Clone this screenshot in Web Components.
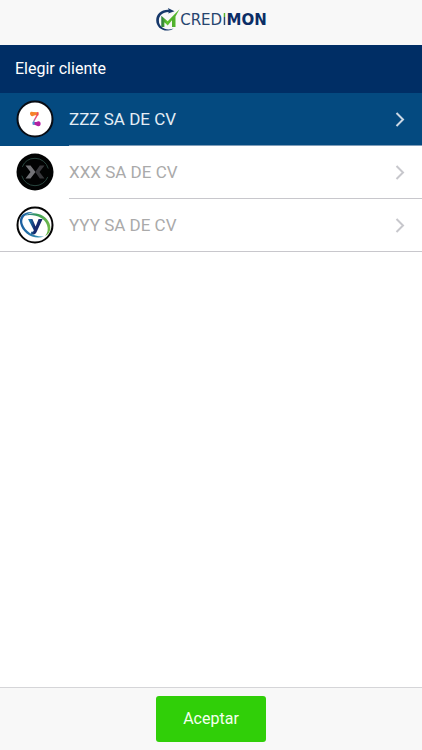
<!DOCTYPE html>
<html lang="es">
<head>
<meta charset="utf-8">
<meta name="viewport" content="width=device-width, initial-scale=1">
<title>Credimon</title>
<style>
html, body { height: 100%; }
body { margin: 0; font-family: Roboto, "Liberation Sans", sans-serif; background: #fff; }
</style>
</head>
<body>
<client-picker></client-picker>

<script>
class BrandLogo extends HTMLElement {
  constructor() {
    super();
    this.attachShadow({ mode: 'open' }).innerHTML = `
      <style>
        :host { display: flex; align-items: center; font: 15px/20px "DejaVu Sans", sans-serif; color: #27456f; }
        svg { display: block; }
        .wide { font-weight: 700; color: #0b2d66; }
        .i { background: linear-gradient(#55b52c 0 7px, #27456f 7px); -webkit-background-clip: text; background-clip: text; color: transparent; }
      </style>
      <svg width="25" height="26" viewBox="0 0 25 26" aria-hidden="true">
        <defs>
          <linearGradient id="m" x1="0" x2="1" y1="0" y2="0"><stop offset="0" stop-color="#28763a"/><stop offset=".3" stop-color="#62c82c"/><stop offset=".6" stop-color="#4fae2e"/><stop offset="1" stop-color="#58bf2c"/></linearGradient>
        </defs>
        <path d="M19.500 4.200 12.900 .900 13.700 2.700C6.500 2.300 1.200 6.800 1.200 13.200c0 6.200 5.200 10.800 11.800 10.300 2.200-.2 4.100-.9 5.600-2.100-7.400 2.900-14.600-.8-14.700-7.700C3.800 8.500 7.800 4.900 13.700 5l-.6 1.500z" fill="#17396b"/>
        <path d="M6.300 20V8.700l6.400 5.600L24.500 2.200 20.500 9.400V20H17v-6.700l-4.300 5.200-3.300-3.300V20z" fill="url(#m)"/>
      </svg>
      <span>CRED</span><span class="i">I</span><span class="wide">MON</span>`;
  }
}

const AVATARS = {
  zzz: `<circle cx="19" cy="19" r="17.500" fill="#fff" stroke="#080c14" stroke-width="2"/>
    <defs><linearGradient id="z" x1="0" x2="0" y1="0" y2="1"><stop stop-color="#f6602c"/><stop offset=".5" stop-color="#ec4a86"/><stop offset="1" stop-color="#5a9fd4"/></linearGradient></defs>
    <path d="M21.500 13.500c.5 2.500-3.700 5.500-3.900 9" fill="none" stroke="url(#z)" stroke-width="1.500"/>
    <path d="M14 13.300c0-1.600 1.400-2 2.800-1.400l5.600.4v2.800c-2 .1-3.800.1-5.400.9-1.600.7-3-.7-3-2.700z" fill="#f5822b"/>
    <path d="M21 12.300h1.400v3.200l-2 .1z" fill="#ee4460"/>
    <path d="M16.800 21.900c2.200.3 3.400.2 4.800-.5 1.900-.8 3.200.8 3 2.600-.1 2-1.700 2.700-3.200 1.900-1.500-.6-3-.9-4.600-1.300z" fill="#b41fa0"/>
    <path d="M16.600 21.800 18.500 22v3l-1.900-.4z" fill="#3e9fd5"/>`,
  xxx: `<circle cx="19" cy="19" r="18.500" fill="#020303"/>
    <circle cx="19" cy="19" r="13.700" fill="none" stroke="#29463f" stroke-dasharray="34 9" stroke-dashoffset="38"/>
    <path d="M9.500 12.500h5l5 6.500-5 6.500h-5l5-6.500z" fill="#737377"/>
    <path d="M28.500 12.500h-4.700l-4.500 6.500 4.500 6.500h4.700l-5-6.500z" fill="#38383c"/>`,
  yyy: `<defs>
      <linearGradient id="g" x1="0" x2="1"><stop stop-color="#1f6f9c"/><stop offset=".5" stop-color="#3b9f5a"/><stop offset="1" stop-color="#74ba48"/></linearGradient>
      <linearGradient id="b" x1="0" x2="1"><stop stop-color="#1a5c9f"/><stop offset="1" stop-color="#379bb5"/></linearGradient>
      <linearGradient id="y" x1="0" x2="1"><stop stop-color="#1b8fbb"/><stop offset=".45" stop-color="#15296d"/></linearGradient>
    </defs>
    <circle cx="19" cy="19" r="17.500" fill="#fff" stroke="#050505" stroke-width="2"/>
    <path d="M9 9.500C18 4.500 30 8.500 33.500 17.500c2 5.500.3 10.500-4.300 12.500 2.500-3 3.300-6.800 1.800-11C28.500 11.500 18.500 7.500 9 9.500z" fill="url(#g)"/>
    <path d="M17 6.200C7.500 5.200 2.700 10.500 4.200 17.500 6.200 27 18 34.500 28 30.500c-9.500 1-18.800-5-21.300-12.500C5 12.500 8.700 7.600 17 6.200z" fill="url(#b)"/>
    <path d="M12 13h4.400l3.200 7.500 3-7.500h4l-6 13c-1.200 2.300-2.700 2.900-5.500 2.400v-2.700c1.600.2 2.200-.1 2.700-1.500z" fill="url(#y)"/>`
};

class ClientItem extends HTMLElement {
  constructor() {
    super();
    this.attachShadow({ mode: 'open' }).innerHTML = `
      <style>
        :host { display: block; color: #aaa; --line: #c8c7cc; --arrow: #c7c7cc; }
        :host([selected]) { background: #044a80; color: #e3edf5; --line: #7f9db9; --arrow: #ccd8e4; }
        button { display: flex; box-sizing: border-box; width: 100%; min-height: 53px; padding: 0 0 0 16px; border: 0; background: none; color: inherit; font: 17px/24px Roboto, "Liberation Sans", sans-serif; text-align: left; cursor: pointer; }
        .avatar { flex: none; margin: 7px 15px 7px 0; }
        .body { flex: 1; display: flex; align-items: center; justify-content: space-between; padding-right: 16px; border-bottom: 1px solid var(--line); }
        :host(:last-of-type) button { border-bottom: 1px solid var(--line); }
        :host(:last-of-type) .body { border-bottom: 0; }
        svg { display: block; }
      </style>
      <button type="button">
        <svg class="avatar" width="38" height="38" viewBox="0 0 38 38" aria-hidden="true"></svg>
        <span class="body"><slot></slot>
          <svg width="12" height="16" viewBox="0 0 12 16" aria-hidden="true"><path d="m2.500 2 6.500 6.500L2.500 15" fill="none" stroke="var(--arrow)" stroke-width="2"/></svg>
        </span>
      </button>`;
  }
  connectedCallback() {
    this.shadowRoot.querySelector('.avatar').innerHTML = AVATARS[this.getAttribute('logo')];
    this.shadowRoot.querySelector('button').setAttribute('aria-pressed', this.hasAttribute('selected'));
  }
}

class ClientPicker extends HTMLElement {
  constructor() {
    super();
    this.attachShadow({ mode: 'open' }).innerHTML = `
      <style>
        :host { display: flex; flex-direction: column; min-height: 100%; background: #fff; }
        header { display: flex; justify-content: center; padding: 7px 0 12px; background: #f8f8f8; }
        h1 { margin: 0; padding: 12px 15px; background: #002e65; color: #fff; font-size: 16px; line-height: 24px; font-weight: 400; }
        main { flex: 1; }
        footer { display: flex; justify-content: center; padding: 8px 0; border-top: 1px solid #d5d5d8; background: #f8f8f8; }
        footer button { padding: 11px 27px; border: 0; border-radius: 3px; background: #30cf08; color: #f4fff0; font: 16px/24px Roboto, "Liberation Sans", sans-serif; cursor: pointer; }
      </style>
      <header><brand-logo></brand-logo></header>
      <main>
        <h1>Elegir cliente</h1>
        <client-item logo="zzz" selected>ZZZ SA DE CV</client-item>
        <client-item logo="xxx">XXX SA DE CV</client-item>
        <client-item logo="yyy">YYY SA DE CV</client-item>
      </main>
      <footer><button type="button">Aceptar</button></footer>`;
  }
}

customElements.define('brand-logo', BrandLogo);
customElements.define('client-item', ClientItem);
customElements.define('client-picker', ClientPicker);
</script>
</body>
</html>
